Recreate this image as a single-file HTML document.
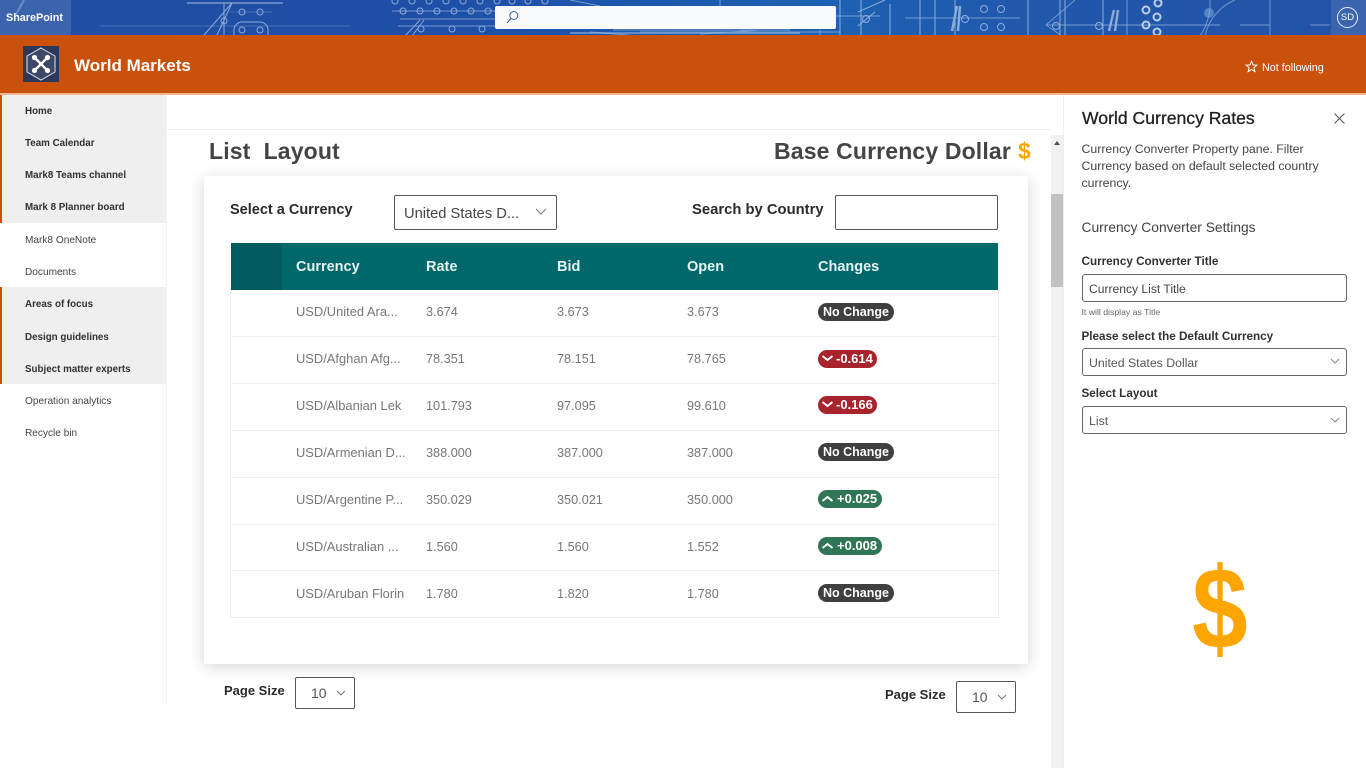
<!DOCTYPE html>
<html lang="en">
<head>
<meta charset="utf-8">
<title>World Markets</title>
<style>
html,body{margin:0;padding:0;width:1366px;height:768px;overflow:hidden;background:#fff;font-family:"Liberation Sans",sans-serif;}
.a{position:absolute;white-space:nowrap;}
.t{position:absolute;white-space:nowrap;line-height:20px;height:20px;}
.nav{position:absolute;left:25px;font-size:10.1px;line-height:20px;color:#444;white-space:nowrap;}
.nav.b{font-weight:bold;color:#323130;font-size:9.8px;}
.c{position:absolute;font-size:12.7px;line-height:20px;color:#777;white-space:nowrap;}
.n{font-size:12.9px;}
.h{position:absolute;top:257px;font-size:14.5px;font-weight:bold;line-height:20px;color:#e6f3f3;white-space:nowrap;}
.l{position:absolute;left:231px;width:768px;height:1px;background:#eee;}
.bd{position:absolute;left:818px;height:18px;border-radius:9px;color:#fff;font-size:13px;font-weight:bold;line-height:18px;white-space:nowrap;box-sizing:border-box;}
.g{background:#3f3f3f;width:76px;padding-left:5px;font-size:12.5px;}
.r{background:#a8242c;width:59px;padding-left:18px;}
.u{background:#2f7556;width:64px;padding-left:19px;}
.bd svg{position:absolute;left:3px;top:4px;}
.box{position:absolute;box-sizing:border-box;border:1px solid #555;border-radius:2px;background:#fff;}
.pb{border-color:#666;border-radius:3px;}
.lb{position:absolute;font-size:11.7px;font-weight:bold;line-height:18px;color:#323130;white-space:nowrap;}
</style>
</head>
<body>

<!-- blueprint suite bar -->
<svg class="a" style="left:0;top:0" width="1366" height="36" viewBox="0 0 1366 36">
<defs>
<linearGradient id="bg" x1="0" x2="1" y1="0" y2="0">
<stop offset="0" stop-color="#234fa4"/><stop offset=".3" stop-color="#1f4ea6"/><stop offset=".45" stop-color="#1c56aa"/><stop offset=".6" stop-color="#1d62b2"/><stop offset=".72" stop-color="#2059ad"/><stop offset="1" stop-color="#2352a6"/>
</linearGradient>
</defs>
<rect width="1366" height="36" fill="url(#bg)"/>
<rect width="71" height="36" fill="#3b64ad"/>
<rect x="1331" width="35" height="36" fill="#3a64ae"/>
<g fill="none" stroke="#cfe0f5" stroke-width="1" opacity=".62">
<path d="M187 3H283" stroke-width="1.3"/><path d="M204 35L232 3M217 35L232 3M224 3V35"/>
<path d="M230 12H272M100 26H350" opacity=".35"/>
<circle cx="224" cy="21" r="3"/><circle cx="242" cy="12" r="3"/><circle cx="260" cy="12" r="3"/><circle cx="242" cy="30" r="3"/><circle cx="260" cy="30" r="3"/>
<path d="M234 36V30a8 8 0 0 1 8-8h18a8 8 0 0 1 8 8v6"/>
<path d="M392 11H495M398 26H495M400 19H495" opacity=".8"/>
<g><circle cx="403" cy="11" r="3"/><circle cx="420" cy="11" r="3"/><circle cx="437" cy="11" r="3"/><circle cx="454" cy="11" r="3"/><circle cx="471" cy="11" r="3"/><circle cx="488" cy="11" r="3"/>
<circle cx="395" cy="1" r="3"/><circle cx="412" cy="1" r="3"/><circle cx="429" cy="1" r="3"/><circle cx="446" cy="1" r="3"/><circle cx="463" cy="1" r="3"/><circle cx="480" cy="1" r="3"/><circle cx="497" cy="1" r="3"/><circle cx="512" cy="1" r="3"/><circle cx="528" cy="1" r="3"/><circle cx="545" cy="1" r="3"/>
<circle cx="421" cy="29" r="3"/><circle cx="452" cy="29" r="3"/><circle cx="482" cy="29" r="3"/></g>
<path d="M405 36L420 20M412 36L424 20"/>
<path d="M570 0L600 6M640 32H840M700 34L760 30M820 36V30M720 0V6M590 32L640 36M613 30H790" opacity=".8"/>
<path d="M570 33H800" stroke="#e6f0fb" stroke-width="2" opacity=".55"/>
<path d="M840 0V36M861 0V36M858 12L885 0M858 26L875 12M890 4V36M920 0V36M935 0V36M955 0V36M1028 0V36M1060 0V36M1065 0V36M1103 0V36"/>
<path d="M836 16H880M905 18H1020M1046 25H1220M1240 25H1270" opacity=".8"/>
<circle cx="866" cy="19" r="3.5"/><circle cx="965" cy="19" r="3.5"/><circle cx="984" cy="9" r="3.5"/><circle cx="1001" cy="9" r="3.5"/><circle cx="984" cy="27" r="3.5"/><circle cx="1001" cy="27" r="3.5"/>
<circle cx="1056" cy="26" r="3.5"/><circle cx="1099" cy="26" r="3.5"/>
<path d="M1046 25L1075 0M1046 25L1062 36M1127 0V36M1200 36A60 60 0 0 0 1210 0M1235 0A50 50 0 0 0 1205 36M1270 0V36M1310 25H1330" opacity=".75"/>
<path d="M952 31L957 6M958 31L960 6M1109 31L1114 10M1115 31L1118 10" stroke-width="2.4"/>
</g>
<g fill="none" stroke="#e2ecf8" stroke-width="2" opacity=".8"><circle cx="1146" cy="10" r="3.5"/><circle cx="1158" cy="3" r="3.5"/><circle cx="1157" cy="17" r="3.5"/><circle cx="1146" cy="25" r="3.5"/><circle cx="1157" cy="32" r="3.5"/></g>
<circle cx="1209" cy="13" r="5" fill="#7fb0e0" opacity=".5"/>
<path d="M14 18L24 0" stroke="#a9bedf" stroke-width="2" opacity=".45"/>
</svg>
<div class="t" style="left:6px;top:8px;font-size:10.8px;font-weight:bold;color:#fff;">SharePoint</div>
<div class="a" style="left:495px;top:6px;width:341px;height:23px;background:#fafbfc;border-radius:2px;"></div>
<svg class="a" style="left:505px;top:9px" width="16" height="16" viewBox="0 0 16 16" fill="none" stroke="#3c5f94" stroke-width="1"><circle cx="8.8" cy="6.5" r="4"/><path d="M6 9.5L2 14"/></svg>
<div class="a" style="left:1337px;top:7px;width:21px;height:21px;box-sizing:border-box;border:1px solid #e8eef7;border-radius:50%;color:#fff;font-size:9.5px;text-align:center;line-height:20px;">SD</div>

<!-- site header -->
<div class="a" style="left:0;top:35px;width:1366px;height:58px;background:#c9510c;"></div>
<div class="a" style="left:0;top:93px;width:1366px;height:2px;background:#f0b594;"></div>
<svg class="a" style="left:23px;top:46px" width="36" height="36" viewBox="0 0 36 36">
<rect width="36" height="36" fill="#2e3859"/>
<path d="M18 2L32 10V26L18 34L4 26V10Z" fill="#3d4869" stroke="#dfe3ec" stroke-width="1"/>
<g stroke="#fff" stroke-width="2.4" fill="none"><path d="M12 12L24 24M24 12L12 24"/></g>
<g fill="#fff"><circle cx="11.5" cy="11.5" r="2.6"/><circle cx="24.5" cy="11.5" r="2.6"/><circle cx="11.5" cy="24.5" r="2.6"/><circle cx="24.5" cy="24.5" r="2.6"/></g>
</svg>
<div class="t" style="left:74px;top:56px;font-size:17px;font-weight:bold;color:#fff;">World Markets</div>
<svg class="a" style="left:1245px;top:60px" width="13" height="13" viewBox="0 0 13 13"><path d="M6.5 1.2L8 4.9L11.9 5.2L8.9 7.7L9.9 11.6L6.5 9.5L3.1 11.6L4.1 7.7L1.1 5.2L5 4.9Z" fill="none" stroke="#fff" stroke-width="1"/></svg>
<div class="t" style="left:1262px;top:58px;font-size:10.8px;color:#fff;">Not following</div>

<!-- left nav -->
<div class="a" style="left:0;top:95px;width:166px;height:128px;background:#efefef;border-left:2px solid #c9510c;box-sizing:border-box;"></div>
<div class="a" style="left:0;top:287px;width:166px;height:97px;background:#efefef;border-left:2px solid #c9510c;box-sizing:border-box;"></div>
<div class="a" style="left:166px;top:95px;width:1px;height:610px;background:#f4f4f4;"></div>
<div class="nav b" style="top:102px">Home</div>
<div class="nav b" style="top:134px">Team Calendar</div>
<div class="nav b" style="top:166px">Mark8 Teams channel</div>
<div class="nav b" style="top:198px">Mark 8 Planner board</div>
<div class="nav" style="top:231px">Mark8 OneNote</div>
<div class="nav" style="top:263px">Documents</div>
<div class="nav b" style="top:295px">Areas of focus</div>
<div class="nav b" style="top:328px">Design guidelines</div>
<div class="nav b" style="top:360px">Subject matter experts</div>
<div class="nav" style="top:392px">Operation analytics</div>
<div class="nav" style="top:424px">Recycle bin</div>

<!-- main -->
<div class="a" style="left:167px;top:129px;width:884px;height:1px;background:#f0f0f0;"></div>
<div class="a" style="left:1051px;top:135px;width:12px;height:633px;background:#f1f1f1;"></div>
<div class="a" style="left:1051px;top:194px;width:12px;height:93px;background:#c1c1c1;"></div>
<svg class="a" style="left:1053px;top:140px" width="8" height="6"><path d="M4 1L7 5H1Z" fill="#505050"/></svg>
<div class="a" style="left:1063px;top:95px;width:1px;height:673px;background:#eeeeee;"></div>

<div class="t" style="left:209px;top:141px;font-size:23px;font-weight:bold;color:#444;letter-spacing:.15px;white-space:pre;">List  Layout</div>
<div class="t" style="left:774px;top:141px;font-size:23px;font-weight:bold;color:#444;letter-spacing:.15px;">Base Currency Dollar</div>
<div class="t" style="left:1018px;top:141px;font-size:23px;font-weight:bold;color:#ffa500;">$</div>

<!-- card -->
<div class="a" style="left:204px;top:176px;width:824px;height:488px;background:#fff;box-shadow:0 3px 14px rgba(0,0,0,.17);"></div>
<div class="t" style="left:230px;top:200px;font-size:14.5px;font-weight:bold;color:#2b2b2b;">Select a Currency</div>
<div class="box" style="left:394px;top:195px;width:163px;height:35px;"></div>
<div class="t" style="left:404px;top:204px;font-size:14.7px;color:#444;">United States D...</div>
<svg class="a" style="left:535px;top:208px" width="12" height="8" fill="none" stroke="#777"><path d="M1 1L6 6L11 1"/></svg>
<div class="t" style="left:692px;top:200px;font-size:14.8px;font-weight:bold;color:#2b2b2b;">Search by Country</div>
<div class="box" style="left:835px;top:195px;width:163px;height:35px;"></div>

<!-- table -->
<div class="a" style="left:231px;top:243px;width:767px;height:47px;background:#00686b;"></div>
<div class="a" style="left:231px;top:243px;width:51px;height:47px;background:#005c5e;"></div>
<div class="h" style="left:296px">Currency</div>
<div class="h" style="left:426px">Rate</div>
<div class="h" style="left:557px">Bid</div>
<div class="h" style="left:687px">Open</div>
<div class="h" style="left:818px">Changes</div>
<div class="a" style="left:230px;top:290px;width:1px;height:328px;background:#eee;"></div>
<div class="a" style="left:998px;top:290px;width:1px;height:328px;background:#eee;"></div>
<div class="l" style="top:336px"></div><div class="l" style="top:383px"></div><div class="l" style="top:430px"></div><div class="l" style="top:477px"></div><div class="l" style="top:524px"></div><div class="l" style="top:570px"></div><div class="l" style="top:617px"></div>

<div class="c n" style="left:296px;top:302px">USD/United Ara...</div><div class="c" style="left:426px;top:302px">3.674</div><div class="c" style="left:557px;top:302px">3.673</div><div class="c" style="left:687px;top:302px">3.673</div>
<div class="bd g" style="top:303px">No Change</div>

<div class="c n" style="left:296px;top:349px">USD/Afghan Afg...</div><div class="c" style="left:426px;top:349px">78.351</div><div class="c" style="left:557px;top:349px">78.151</div><div class="c" style="left:687px;top:349px">78.765</div>
<div class="bd r" style="top:350px"><svg width="13" height="9" fill="none" stroke="#fff" stroke-width="2"><path d="M1.5 2L6.5 6L11.5 2"/></svg>-0.614</div>

<div class="c n" style="left:296px;top:396px">USD/Albanian Lek</div><div class="c" style="left:426px;top:396px">101.793</div><div class="c" style="left:557px;top:396px">97.095</div><div class="c" style="left:687px;top:396px">99.610</div>
<div class="bd r" style="top:396px"><svg width="13" height="9" fill="none" stroke="#fff" stroke-width="2"><path d="M1.5 2L6.5 6L11.5 2"/></svg>-0.166</div>

<div class="c n" style="left:296px;top:443px">USD/Armenian D...</div><div class="c" style="left:426px;top:443px">388.000</div><div class="c" style="left:557px;top:443px">387.000</div><div class="c" style="left:687px;top:443px">387.000</div>
<div class="bd g" style="top:443px">No Change</div>

<div class="c n" style="left:296px;top:490px">USD/Argentine P...</div><div class="c" style="left:426px;top:490px">350.029</div><div class="c" style="left:557px;top:490px">350.021</div><div class="c" style="left:687px;top:490px">350.000</div>
<div class="bd u" style="top:490px"><svg width="13" height="9" fill="none" stroke="#fff" stroke-width="2"><path d="M1.5 7L6.5 3L11.5 7"/></svg>+0.025</div>

<div class="c n" style="left:296px;top:537px">USD/Australian ...</div><div class="c" style="left:426px;top:537px">1.560</div><div class="c" style="left:557px;top:537px">1.560</div><div class="c" style="left:687px;top:537px">1.552</div>
<div class="bd u" style="top:537px"><svg width="13" height="9" fill="none" stroke="#fff" stroke-width="2"><path d="M1.5 7L6.5 3L11.5 7"/></svg>+0.008</div>

<div class="c n" style="left:296px;top:584px">USD/Aruban Florin</div><div class="c" style="left:426px;top:584px">1.780</div><div class="c" style="left:557px;top:584px">1.820</div><div class="c" style="left:687px;top:584px">1.780</div>
<div class="bd g" style="top:584px">No Change</div>

<!-- page size -->
<div class="t" style="left:224px;top:681px;font-size:13px;font-weight:bold;color:#2b2b2b;">Page Size</div>
<div class="box" style="left:295px;top:677px;width:60px;height:32px;"></div>
<div class="t" style="left:311px;top:683px;font-size:14px;color:#555;">10</div>
<svg class="a" style="left:335px;top:690px" width="12" height="8" fill="none" stroke="#777"><path d="M2 1L6 5L10 1"/></svg>
<div class="t" style="left:885px;top:685px;font-size:13px;font-weight:bold;color:#2b2b2b;">Page Size</div>
<div class="box" style="left:956px;top:681px;width:60px;height:32px;"></div>
<div class="t" style="left:972px;top:687px;font-size:14px;color:#555;">10</div>
<svg class="a" style="left:996px;top:694px" width="12" height="8" fill="none" stroke="#777"><path d="M2 1L6 5L10 1"/></svg>

<!-- property pane -->
<div class="t" style="left:1082px;top:108px;font-size:17.6px;color:#201f1e;-webkit-text-stroke:.3px #201f1e;">World Currency Rates</div>
<svg class="a" style="left:1333px;top:112px" width="13" height="13" fill="none" stroke="#555" stroke-width="1"><path d="M1.5 1.5L11.5 11.5M11.5 1.5L1.5 11.5"/></svg>
<div class="a" style="left:1081.5px;top:141px;font-size:12.3px;line-height:17px;color:#444;">Currency Converter Property pane. Filter<br>Currency based on default selected country<br>currency.</div>
<div class="t" style="left:1081.5px;top:218px;font-size:13.8px;color:#444;">Currency Converter Settings</div>
<div class="lb" style="left:1081.5px;top:253px">Currency Converter Title</div>
<div class="box pb" style="left:1082px;top:274px;width:265px;height:28px;"></div>
<div class="t" style="left:1089px;top:279px;font-size:12.1px;color:#444;">Currency List Title</div>
<div class="t" style="left:1081.5px;top:302px;font-size:8.7px;color:#666;">It will display as Title</div>
<div class="lb" style="left:1081.5px;top:328px">Please select the Default Currency</div>
<div class="box pb" style="left:1082px;top:348px;width:265px;height:28px;"></div>
<div class="t" style="left:1089px;top:353px;font-size:12.3px;color:#555;">United States Dollar</div>
<svg class="a" style="left:1330px;top:358px" width="10" height="7" fill="none" stroke="#888"><path d="M1 1L5 5L9 1"/></svg>
<div class="lb" style="left:1081.5px;top:385px">Select Layout</div>
<div class="box pb" style="left:1082px;top:406px;width:265px;height:28px;"></div>
<div class="t" style="left:1089px;top:411px;font-size:12.3px;color:#555;">List</div>
<svg class="a" style="left:1330px;top:417px" width="10" height="7" fill="none" stroke="#888"><path d="M1 1L5 5L9 1"/></svg>
<div class="a" style="left:1192px;top:544px;font-size:100px;line-height:130px;font-weight:bold;color:#ffa500;transform:scaleY(1.16);">$</div>

</body>
</html>
